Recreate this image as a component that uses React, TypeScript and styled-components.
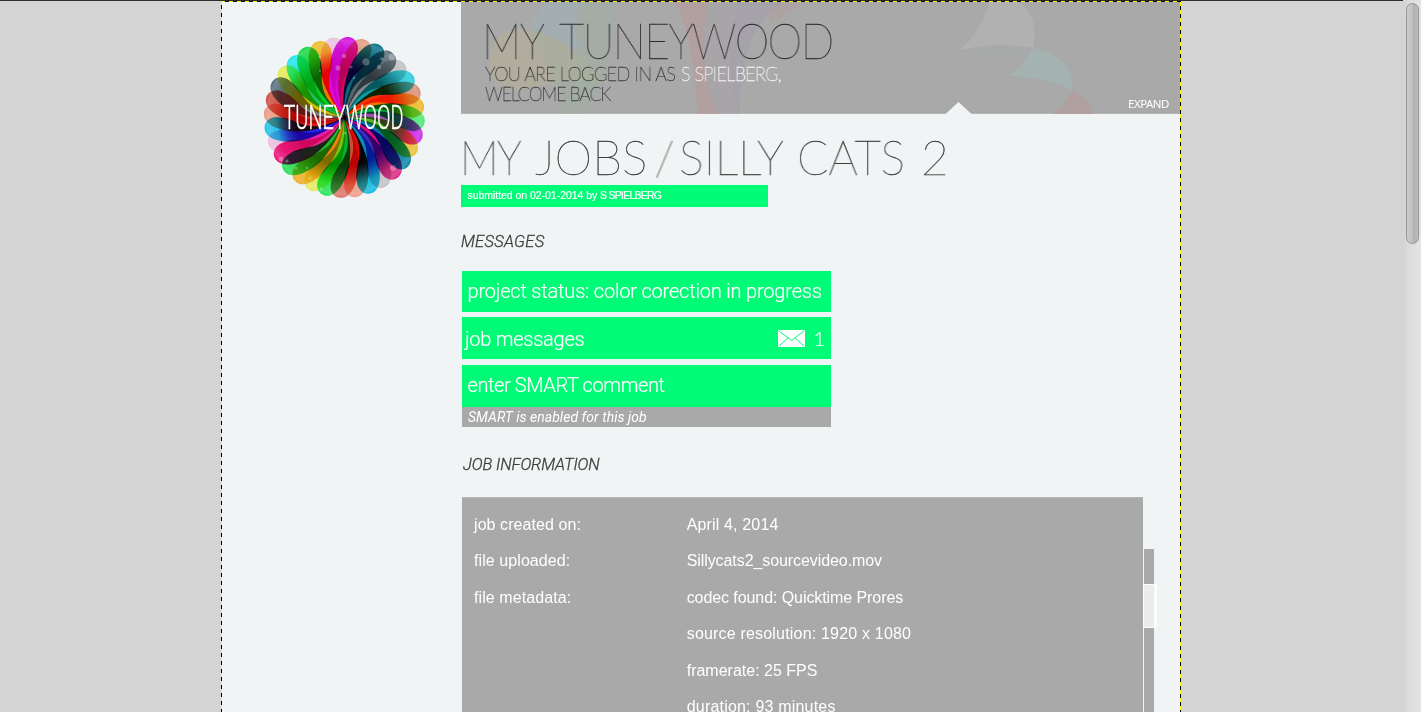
import React from 'react';
import styled, { createGlobalStyle } from 'styled-components';

const GREEN = '#00fb76';
const GREY = '#a9a9a9';
const PAPER = '#f0f4f5';

const GlobalStyle = createGlobalStyle`
  html, body { margin: 0; padding: 0; background: #d4d4d4; }
  body { height: 712px; overflow: hidden; }
  * { box-sizing: border-box; }
`;

const Screen = styled.div`
  display: flex;
  width: 1421px;
  height: 712px;
  overflow: hidden;
  background: #d4d4d4;
`;

const Gutter = styled.div<{ $width: number }>`
  flex: none;
  width: ${p => p.$width}px;
  border-top: 1px solid #2e2a2e;
`;

const Page = styled.div`
  flex: none;
  display: flex;
  flex-direction: column;
  width: 960px;
  height: 712px;
  border-top: 1px solid #2e2a2e;
`;

const DashTop = styled.div`
  flex: none;
  height: 1px;
  background: repeating-linear-gradient(90deg, #ff0 0 4px, #000 4px 8px);
`;

const PageRow = styled.div`
  display: flex;
  flex: 1;
  min-height: 0;
`;

const DashSide = styled.div<{ $shift: number }>`
  flex: none;
  width: 1px;
  background: repeating-linear-gradient(180deg, #000 0 4px, #ff0 4px 8px) 0 ${p => p.$shift}px / 1px 8px;
`;

const Sidebar = styled.aside`
  flex: none;
  width: 239px;
  padding: 30px 0 0 37px;
  background: ${PAPER};
`;

const Main = styled.main`
  flex: 1;
  min-width: 0;
  background: ${PAPER};
`;

const Banner = styled.header`
  position: relative;
  display: flex;
  justify-content: space-between;
  height: 112px;
  padding: 16px 11px 0 21px;
  background: ${GREY};
  border-bottom: 1px solid #b4b5b5;
  font-family: Lato, sans-serif;
  font-weight: 100;
  color: #2c2c2c;
`;

const BannerArt = styled.svg`
  position: absolute;
  left: 0;
  top: 0;
`;

const BannerText = styled.div`
  position: relative;
`;

const WordRow = styled.div<{ $height: number; $size: number; $stroke: number }>`
  display: flex;
  height: ${p => p.$height}px;
  font-size: ${p => p.$size}px;
  line-height: ${p => p.$height}px;
  -webkit-text-stroke: ${p => p.$stroke}px currentColor;
`;

const Word = styled.span<{ $width: number; $stretch?: number; $track?: number; $tone?: string }>`
  flex: none;
  width: ${p => p.$width}px;
  white-space: nowrap;
  letter-spacing: ${p => p.$track ?? 0}px;
  transform: scaleX(${p => p.$stretch ?? 1});
  transform-origin: 0 50%;
  will-change: transform;
  ${p => p.$tone && `color: ${p.$tone};`}
`;

const Greeting = styled.div`
  padding-left: 3px;
`;

const Expand = styled.span`
  position: relative;
  align-self: flex-end;
  margin-bottom: 1px;
  font: 400 11.5px/16px 'Noto Sans', sans-serif;
  letter-spacing: -0.5px;
  color: #fff;
`;

const Title = styled.h1`
  display: flex;
  height: 58px;
  margin: 13px 0 0 -1px;
  padding-left: 0;
  font: 100 48px/60px Lato, sans-serif;
  color: #3c3c3c;
  -webkit-text-stroke: 0.4px currentColor;
`;

const Slash = styled(Word)`
  font-weight: 300;
  color: #b6b6b6;
`;

const Submitted = styled.div`
  width: 307px;
  height: 22px;
  padding-left: 6.5px;
  background: ${GREEN};
  font: 400 10.5px/21px 'Liberation Sans', sans-serif;
  letter-spacing: -0.04px;
  color: #fff;
  -webkit-text-stroke: 0.2px #fff;
`;

const Author = styled.span`
  letter-spacing: -0.75px;
`;

const SectionHeading = styled.h2<{ $before: number; $after: number; $indent?: number; $track?: number }>`
  margin: ${p => p.$before}px 0 ${p => p.$after}px ${p => p.$indent ?? 0}px;
  font: italic 300 16.5px/20px Roboto, sans-serif;
  letter-spacing: ${p => p.$track ?? 0}px;
  color: #3c3c3c;
  -webkit-text-stroke: 0.3px currentColor;
`;

const StatusList = styled.div`
  width: 369px;
  margin-left: 1px;
`;

const StatusBar = styled.div<{ $height: number; $gap?: number; $line: number; $indent?: number; $track: number }>`
  display: flex;
  height: ${p => p.$height}px;
  margin-bottom: ${p => p.$gap ?? 0}px;
  padding: 0 5px 0 ${p => p.$indent ?? 5.5}px;
  background: ${GREEN};
  font: 300 20px/${p => p.$line}px Roboto, sans-serif;
  letter-spacing: ${p => p.$track}px;
  white-space: nowrap;
  color: #fff;
  -webkit-text-stroke: 0.2px #fff;
`;

const Mail = styled.svg`
  margin: 13px 8px 0 auto;
`;

const Count = styled.span`
  padding-right: 1px;
  font-family: Lato, sans-serif;
  line-height: 43px;
  letter-spacing: 0;
`;

const Note = styled.div`
  height: 20px;
  padding-left: 6px;
  background: ${GREY};
  font: italic 400 14px/20px Roboto, sans-serif;
  letter-spacing: 0.03px;
  color: #fff;
`;

const InfoArea = styled.div`
  display: flex;
  height: 215px;
  margin-left: 1px;
`;

const InfoPanel = styled.dl`
  flex: none;
  display: grid;
  grid-template-columns: 213.7px 1fr;
  grid-auto-rows: 36.5px;
  width: 681px;
  margin: 0;
  padding: 8.8px 0 0 11px;
  overflow: hidden;
  background: ${GREY};
  box-shadow: inset 0 1px #b3b5b5;
  font: 400 16px/37px 'Liberation Sans', sans-serif;
  color: #fff;
`;

const Term = styled.dt`
  padding-left: 1px;
  letter-spacing: 0.08px;
`;

const Value = styled.dd<{ $track: number }>`
  margin: 0;
  letter-spacing: ${p => p.$track}px;
`;

const PanelTrack = styled.div`
  width: 10px;
  margin: 52px 0 0 1px;
  padding-top: 35px;
  background: ${GREY};
`;

const PanelThumb = styled.div`
  width: 14px;
  height: 44px;
  margin-left: -1px;
  background: #ececec;
  border: solid #fcfdfd;
  border-width: 1px 3px 1px 1px;
`;

const WindowTrack = styled.div`
  flex: 1;
  padding: 3px 2px 0 3px;
  background: linear-gradient(90deg, #d4d4d4 0 2px, #dadada 4px, #e4e4e4);
`;

const WindowThumb = styled.div`
  width: 13px;
  height: 241px;
  border: 1px solid #959595;
  border-radius: 7px;
  background: linear-gradient(90deg, #cdcdcd, #c2c2c2 45%, #b2b2b2 60%, #bcbcbc);
`;

/* Each petal: colour close to the centre, colour at the tip */
const petals: [string, string][] = [
  ['#e000e0', '#e000ea'], ['#dd0060', '#f2a080'], ['#006880', '#007088'], ['#54646c', '#5c6c78'],
  ['#8c8c8c', '#cbc8c9'], ['#00a0a8', '#20d4e4'], ['#ff3000', '#e89078'], ['#ff7000', '#fcc020'],
  ['#00b838', '#48f470'], ['#a050b0', '#d820f0'], ['#50c020', '#fcc830'], ['#0074c0', '#0088b0'],
  ['#e80080', '#ea2080'], ['#3828c8', '#cfc8cd'], ['#0090c0', '#08c0e8'], ['#f00000', '#ffa088'],
  ['#d05030', '#ea7464'], ['#00b828', '#20f050'], ['#80c800', '#f4f460'], ['#ff8800', '#ffb420'],
  ['#18c028', '#20e850'], ['#e82888', '#fa0878'], ['#f018b0', '#fac4e6'], ['#1820f0', '#18c8f4'],
  ['#e81008', '#fa9c84'], ['#c82820', '#d84c40'], ['#787c80', '#546c7c'], ['#e0c000', '#f6f650'],
  ['#18c868', '#18f0f4'], ['#00d424', '#10e040'], ['#ff7800', '#ffc020'], ['#f000e0', '#fac8e8'],
];

const bubbles = [
  [85, 24, 2.2], [79, 36, 2.6], [107, 30, 3.6], [120, 35, 2.2], [92, 35, 1.6], [123, 27, 1.8],
  [61, 25, 1.3], [95, 46, 1.2], [61, 39, 1.1], [28, 129, 1.6], [37, 136, 1.6], [22, 127, 2.2],
  [51, 146, 1.5], [62, 157, 1.4], [86, 101, 1.6], [134, 136, 3], [48, 136, 1.2], [133, 25, 3.4],
];

function Logo() {
  return (
    <svg width="170" height="174" viewBox="0 0 170 174">
      <defs>
        {petals.map(([inner, tip], i) => (
          <radialGradient key={i} id={`petal${i}`} gradientUnits="userSpaceOnUse" cx="0" cy="0" r="81">
            <stop offset="0.6" stopColor={inner} stopOpacity="0.97" />
            <stop offset="0.84" stopColor={tip} stopOpacity="0.92" />
            <stop offset="0.95" stopColor={tip} stopOpacity="0.78" />
            <stop offset="1" stopColor={tip} />
          </radialGradient>
        ))}
      </defs>
      <g transform="translate(85.3 85.4)">
        {petals.map((_, i) => (
          <path
            key={i}
            d="M0 0C-5 -8 -14 -26 -15 -46C-15 -66 -8 -80.500 2 -80.500C10 -80.500 14 -73 12 -65C9 -50 -3 -44 -4 -26C-4 -14 -1 -5 1 0Z"
            fill={`url(#petal${i})`}
            transform={`rotate(${i * 11.25 + 1})`}
            style={{ mixBlendMode: 'multiply' }}
          />
        ))}
      </g>
      {bubbles.map(([x, y, r], i) => (
        <circle key={i} cx={x} cy={y} r={r} fill="#fff" opacity="0.28" />
      ))}
      <text
        x="24.500"
        y="97"
        fontFamily="Roboto, sans-serif"
        fontSize="34"
        fontWeight="300"
        fill="#fff"
        stroke="#fff"
        strokeWidth="0.4"
        textLength="120"
        lengthAdjust="spacingAndGlyphs"
      >
        TUNEYWOOD
      </text>
    </svg>
  );
}

function Art() {
  return (
    <BannerArt width="719" height="112" viewBox="461 2 719 112">
      <path d="M490 68C488 44 499 28 520 29C552 31 582 52 603 83C570 78 540 84 515 92C500 88 491 82 490 68Z" fill="#b8b090" opacity="0.45" />
      <path d="M530 30C533 15 541 6 552 2L580 2C575 20 576 40 582 56C566 42 549 33 530 30Z" fill="#98b4bc" opacity="0.45" />
      <path d="M580 2L613 2C616 40 607 85 584 114L560 114C588 80 572 35 580 2Z" fill="#98b49c" opacity="0.22" />
      <path d="M530 30C556 34 584 54 603 83C594 96 580 106 560 114C556 85 545 55 530 30Z" fill="#9cb0a0" opacity="0.25" />
      <path d="M675 2L709 2C701 30 702 80 718 114L698 114C694 76 692 34 675 2Z" fill="#bc9496" opacity="0.45" />
      <path d="M709 2L738 2C727 40 731 80 740 114L718 114C702 80 701 30 709 2Z" fill="#a49ca4" opacity="0.3" />
      <path d="M738 2L784 2C750 20 739 70 740 114C729 80 727 40 738 2Z" fill="#a090b0" opacity="0.25" />
      <path d="M768 14C773 6 780 2 790 2L803 2C790 14 777 20 770 24Z" fill="#bc9494" opacity="0.25" />
      <path d="M989 2C986 18 976 37 959 50C985 44 1015 44 1033 48C1037 31 1034 12 1019 2Z" fill="#b7b7b7" opacity="0.6" />
      <path d="M1033 48C1027 59 1020 69 1009 76C1035 77 1055 82 1072 90C1075 70 1060 54 1033 48Z" fill="#a3b8b6" opacity="0.7" />
      <path d="M1072 90C1067 101 1061 108 1052 114L1094 114C1092 104 1084 96 1072 90Z" fill="#b49c9c" opacity="0.7" />
      <ellipse cx="997" cy="52" rx="15" ry="7" fill="#a3aca9" opacity="0.5" />
      <circle cx="1017" cy="51" r="4" fill="#9fb0ac" opacity="0.6" />
      <path d="M945.500 114L958.500 102L971.500 114Z" fill={PAPER} />
    </BannerArt>
  );
}

const info: [string, string, number][] = [
  ['job created on:', 'April 4, 2014', 0.15],
  ['file uploaded:', 'Sillycats2_sourcevideo.mov', -0.08],
  ['file metadata:', 'codec found: Quicktime Prores', -0.08],
  ['', 'source resolution: 1920 x 1080', 0.19],
  ['', 'framerate: 25 FPS', 0],
  ['', 'duration: 93 minutes', 0.2],
];

export default function App() {
  return (
    <Screen>
      <GlobalStyle />
      <Gutter $width={221} />
      <Page>
        <DashTop />
        <PageRow>
          <DashSide $shift={3} />
          <Sidebar>
            <Logo />
          </Sidebar>
          <Main>
            <Banner>
              <Art />
              <BannerText>
                <WordRow $height={45} $size={49} $stroke={0.35}>
                  <Word $width={77} $stretch={0.9} $track={-1.7}>MY</Word>
                  <Word $width={280} $stretch={0.9} $track={-1.7}>TUNEYWOOD</Word>
                </WordRow>
                <Greeting>
                  <WordRow $height={20} $size={20} $stroke={0.35}>
                    <Word $width={196} $stretch={0.9} $track={-0.57}>YOU ARE LOGGED IN AS</Word>
                    <Word $width={112} $stretch={0.9} $track={-0.7} $tone="#fff">S SPIELBERG,</Word>
                  </WordRow>
                  <WordRow $height={20} $size={20} $stroke={0.35}>
                    <Word $width={140} $stretch={0.88} $track={-1.1}>WELCOME BACK</Word>
                  </WordRow>
                </Greeting>
              </BannerText>
              <Expand>EXPAND</Expand>
            </Banner>
            <Title>
              <Word $width={75} $stretch={0.9} $track={-1.7}>MY</Word>
              <Word $width={119}>JOBS</Word>
              <Slash $width={25}>/</Slash>
              <Word $width={118} $stretch={0.97}>SILLY</Word>
              <Word $width={124} $stretch={0.96}>CATS</Word>
              <Word $width={30}>2</Word>
            </Title>
            <Submitted>
              submitted on 02-01-2014 by <Author>S SPIELBERG</Author>
            </Submitted>
            <SectionHeading $before={25} $after={19} $track={0.25}>MESSAGES</SectionHeading>
            <StatusList>
              <StatusBar $height={41} $gap={5} $line={41} $track={-0.19}>
                project status: color corection in progress
              </StatusBar>
              <StatusBar $height={42} $gap={6} $line={44} $indent={3} $track={-0.25}>
                job messages
                <Mail width="27" height="17" viewBox="0 0 27 17">
                  <rect width="27" height="17" rx="1" fill="#fff" />
                  <path d="M1 1L13.500 10.500L26 1M1 16L10 8M26 16L17 8" fill="none" stroke={GREEN} strokeWidth="1" />
                </Mail>
                <Count>1</Count>
              </StatusBar>
              <StatusBar $height={42} $line={40} $track={-0.4}>enter SMART comment</StatusBar>
              <Note>SMART is enabled for this job</Note>
            </StatusList>
            <SectionHeading $before={28} $after={22} $indent={2} $track={-0.1}>JOB INFORMATION</SectionHeading>
            <InfoArea>
              <InfoPanel>
                {info.map(([term, value, track]) => (
                  <React.Fragment key={value}>
                    <Term>{term}</Term>
                    <Value $track={track}>{value}</Value>
                  </React.Fragment>
                ))}
              </InfoPanel>
              <PanelTrack>
                <PanelThumb />
              </PanelTrack>
            </InfoArea>
          </Main>
          <DashSide $shift={4} />
        </PageRow>
      </Page>
      <Gutter $width={222} />
      <WindowTrack>
        <WindowThumb />
      </WindowTrack>
    </Screen>
  );
}
